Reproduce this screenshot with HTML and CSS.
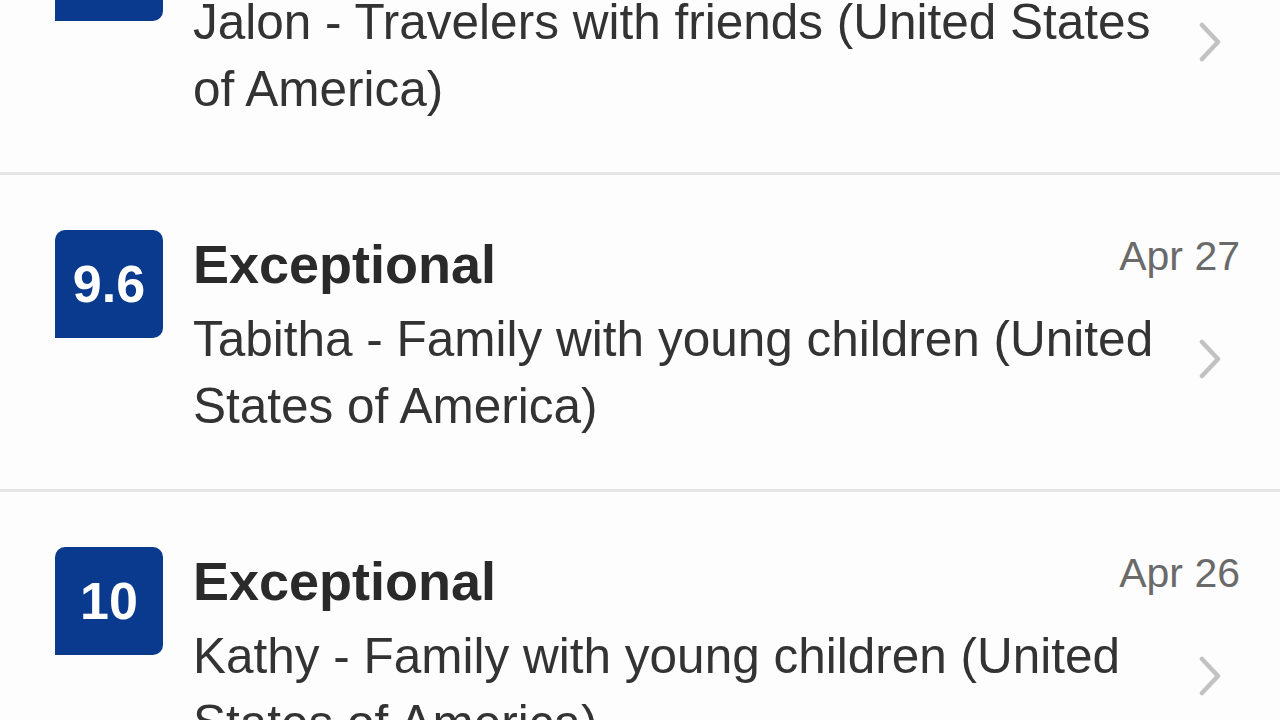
FILE: index.html
```html
<!DOCTYPE html>
<html lang="en">
<head>
<meta charset="utf-8">
<title>Reviews</title>
<link rel="stylesheet" href="styles.css">
</head>
<body>
<div class="list">
  <div class="row">
    <div class="badge"></div>
    <div class="main">
      <div class="head head-empty"></div>
      <div class="body">
        <div class="text">Jalon - Travelers with friends (United States of America)</div>
        <svg class="chev" viewBox="0 0 24 40" width="24" height="40"><path d="M4 3 L20 20 L4 37" fill="none" stroke="#c2c2c2" stroke-width="4.5" stroke-linecap="round" stroke-linejoin="round"/></svg>
      </div>
    </div>
  </div>
  <div class="row">
    <div class="badge">9.6</div>
    <div class="main">
      <div class="head">
        <div class="title">Exceptional</div>
        <div class="date">Apr 27</div>
      </div>
      <div class="body">
        <div class="text">Tabitha - Family with young children (United States of America)</div>
        <svg class="chev" viewBox="0 0 24 40" width="24" height="40"><path d="M4 3 L20 20 L4 37" fill="none" stroke="#c2c2c2" stroke-width="4.5" stroke-linecap="round" stroke-linejoin="round"/></svg>
      </div>
    </div>
  </div>
  <div class="row">
    <div class="badge">10</div>
    <div class="main">
      <div class="head">
        <div class="title">Exceptional</div>
        <div class="date">Apr 26</div>
      </div>
      <div class="body">
        <div class="text">Kathy - Family with young children (United States of America)</div>
        <svg class="chev" viewBox="0 0 24 40" width="24" height="40"><path d="M4 3 L20 20 L4 37" fill="none" stroke="#c2c2c2" stroke-width="4.5" stroke-linecap="round" stroke-linejoin="round"/></svg>
      </div>
    </div>
  </div>
</div>
</body>
</html>
```
FILE: styles.css
```css
html, body {
  margin: 0;
  padding: 0;
  background: #fdfdfd;
  overflow: hidden;
}
body {
  font-family: "Liberation Sans", Arial, sans-serif;
  color: #303030;
}
.list {
  margin-top: -142px;
}
.row {
  display: flex;
  align-items: flex-start;
  gap: 30px;
  padding: 55px 40px 50px 55px;
  border-bottom: 3px solid #e6e6e6;
}
.badge {
  flex: 0 0 108px;
  height: 108px;
  background: #0a3a8e;
  color: #ffffff;
  border-radius: 10px 10px 10px 0;
  display: flex;
  align-items: center;
  justify-content: center;
  font-weight: 700;
  font-size: 52px;
}
.main {
  flex: 1;
  min-width: 0;
}
.head {
  display: flex;
  justify-content: space-between;
  align-items: flex-start;
  margin-top: 2px;
}
.head-empty {
  height: 64px;
}
.title {
  font-size: 54px;
  line-height: 64px;
  font-weight: 700;
  color: #2a2a2a;
}
.date {
  font-size: 41px;
  line-height: 48px;
  color: #6a6a6a;
}
.body {
  display: flex;
  align-items: flex-start;
  margin-top: 9px;
}
.text {
  flex: 1;
  font-size: 49.5px;
  line-height: 67px;
  color: #333333;
}
.chev {
  flex: 0 0 24px;
  margin: 34px 18px 0 20px;
}
```
